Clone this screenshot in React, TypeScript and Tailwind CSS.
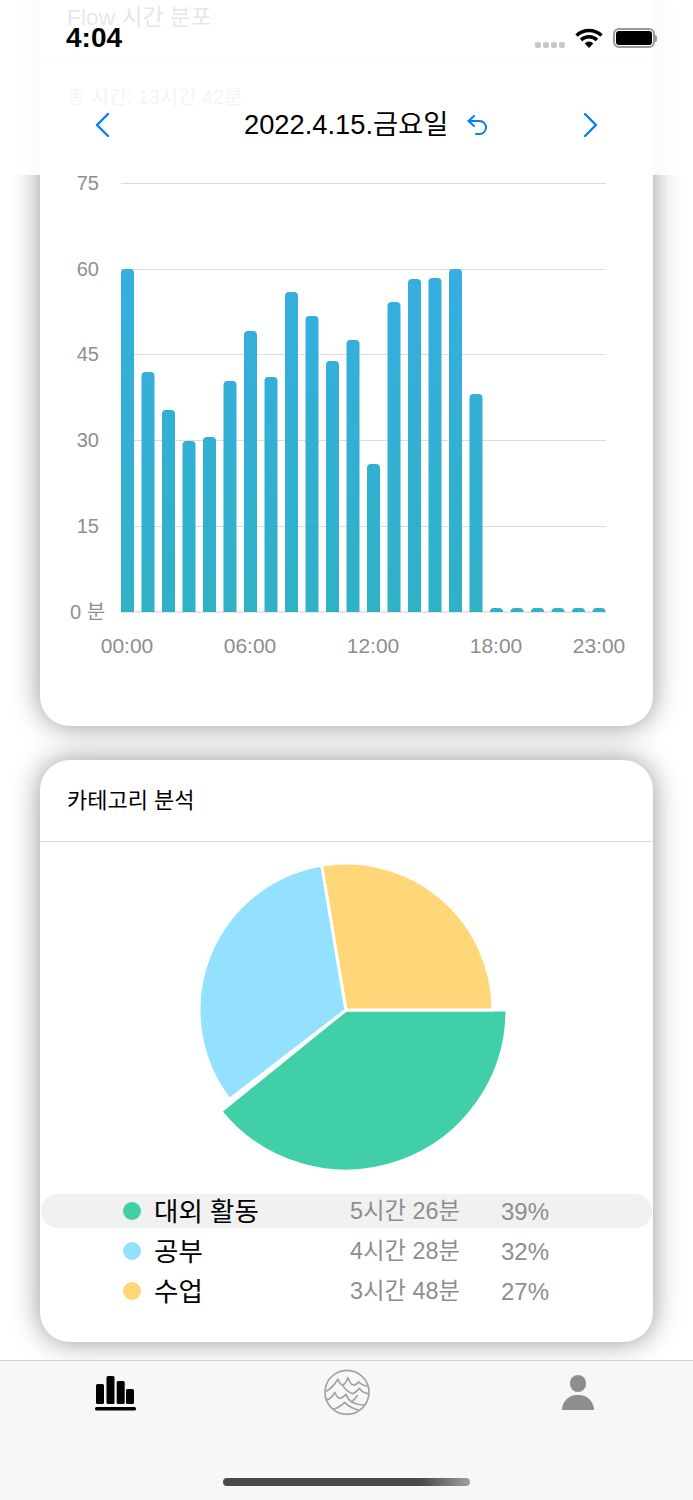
const fontStack = 'font-["Liberation_Sans","Noto_Sans_CJK_KR",sans-serif]'

const barTops = [269, 372, 410, 441, 437, 381, 331, 377, 292, 316, 361, 340, 464, 302, 279, 278, 269, 394, 608, 608, 608, 608, 608, 608]
const gridLines = [
  { y: 183, label: '75' },
  { y: 269, label: '60' },
  { y: 354, label: '45' },
  { y: 440, label: '30' },
  { y: 526, label: '15' },
]
const hourLabels = [
  { x: 127, label: '00:00' },
  { x: 250, label: '06:00' },
  { x: 373, label: '12:00' },
  { x: 496, label: '18:00' },
  { x: 599, label: '23:00' },
]
const legend = [
  { name: '대외 활동', time: '5시간 26분', pct: '39%', dot: 'bg-[#41cfa8]', active: true },
  { name: '공부', time: '4시간 28분', pct: '32%', dot: 'bg-[#93e1fe]', active: false },
  { name: '수업', time: '3시간 48분', pct: '27%', dot: 'bg-[#ffd778]', active: false },
]

function slice(r: number, from: number, to: number) {
  const rad = (deg: number) => (deg * Math.PI) / 180
  const cx = 306
  const cy = 168
  const x1 = cx + r * Math.cos(rad(from))
  const y1 = cy + r * Math.sin(rad(from))
  const x2 = cx + r * Math.cos(rad(to))
  const y2 = cy + r * Math.sin(rad(to))
  const large = to - from > 180 ? 1 : 0
  return `M${cx} ${cy}L${x1} ${y1}A${r} ${r} 0 ${large} 1 ${x2} ${y2}Z`
}

function BarChart() {
  // chart coordinates are page y minus 170, page x minus 40
  return (
    <svg className="mt-[60px] block" width="613" height="500" viewBox="40 170 613 500">
      <defs>
        <linearGradient id="bar" x1="0" y1="269" x2="0" y2="612" gradientUnits="userSpaceOnUse">
          <stop offset="0" stopColor="#36aee0" />
          <stop offset="1" stopColor="#2fb1c6" />
        </linearGradient>
      </defs>
      {gridLines.map((g) => (
        <g key={g.y}>
          <line x1="121" x2="606" y1={g.y + 0.5} y2={g.y + 0.5} stroke="#dcdcdc" />
          <text x="99" y={g.y + 7} textAnchor="end" fontSize="20" fill="#8e8e8e">{g.label}</text>
        </g>
      ))}
      <line x1="121" x2="606" y1="612" y2="612" stroke="#e6e6e6" strokeWidth="2" />
      <text x="70" y="619" fontSize="20" fill="#8e8e8e">0 분</text>
      {barTops.map((top, i) => (
        <path
          key={i}
          d={`M${121 + i * 20.5} 612V${top + 4}q0 -4 4 -4h5q4 0 4 4V612Z`}
          fill="url(#bar)"
        />
      ))}
      {hourLabels.map((h) => (
        <text key={h.x} x={h.x} y="653" textAnchor="middle" fontSize="21" fill="#8e8e8e">{h.label}</text>
      ))}
    </svg>
  )
}

function PieChart() {
  return (
    <svg className="block" width="613" height="352" viewBox="0 0 613 352">
      <path d={slice(161, 0, 141)} fill="#41cfa8" stroke="#fff" strokeWidth="3" strokeLinejoin="round" />
      <path d={slice(147, 142.5, 260.5)} fill="#93e1fe" stroke="#fff" strokeWidth="3" strokeLinejoin="round" />
      <path d={slice(147, 260.5, 360)} fill="#ffd778" stroke="#fff" strokeWidth="3" strokeLinejoin="round" />
    </svg>
  )
}

function StatusBar() {
  return (
    <div className="flex h-[76px] items-center pl-[66px]">
      <span className="text-[28px] leading-none font-bold text-black">4:04</span>
      <div className="mt-[14px] ml-auto flex gap-[2px]">
        <span className="h-[6px] w-[6px] rounded-[2px] bg-[#c8c8c8]" />
        <span className="h-[6px] w-[6px] rounded-[2px] bg-[#c8c8c8]" />
        <span className="h-[6px] w-[6px] rounded-[2px] bg-[#c8c8c8]" />
        <span className="h-[6px] w-[6px] rounded-[2px] bg-[#c8c8c8]" />
      </div>
      <svg className="ml-[10px]" width="28" height="20" viewBox="0 0 28 20" fill="none" stroke="#000" strokeWidth="3.4">
        <path d="M1.5 7.5a18 18 0 0 1 25 0" />
        <path d="M6 12a11.5 11.5 0 0 1 16 0" />
        <path d="M14 20l-4.3-4.6a6 6 0 0 1 8.6 0Z" fill="#000" stroke="none" />
      </svg>
      <div className="ml-[10px] mr-[36px] flex items-center">
        <div className="h-[20px] w-[42px] rounded-[6px] border-2 border-[#9a9a9a] p-[1px]">
          <div className="h-full w-full rounded-[3px] bg-black" />
        </div>
        <div className="h-[7px] w-[2px] rounded-r-sm bg-[#9a9a9a]" />
      </div>
    </div>
  )
}

function DateBar() {
  return (
    <div className="flex h-[98px] items-center pr-[94px] pl-[94px]">
      <svg width="16" height="26" viewBox="0 0 16 26" fill="none" stroke="#0a7cf5" strokeWidth="2.4" strokeLinecap="round" strokeLinejoin="round">
        <path d="M14 2 3 13l11 11" />
      </svg>
      <span className="ml-[134px] w-[206px] text-[27.3px] leading-none whitespace-nowrap text-black">2022.4.15.금요일</span>
      <svg className="ml-[15px]" width="24" height="24" viewBox="0 0 24 24" fill="none" stroke="#0a7cf5" strokeWidth="2" strokeLinecap="round" strokeLinejoin="round">
        <path d="M9 13 3.5 8 9 3" />
        <path d="M3.5 8h11a6 6 0 0 1 0 13H11" />
      </svg>
      <svg className="ml-auto" width="16" height="26" viewBox="0 0 16 26" fill="none" stroke="#0a7cf5" strokeWidth="2.4" strokeLinecap="round" strokeLinejoin="round">
        <path d="M2 2l11 11L2 24" />
      </svg>
    </div>
  )
}

function TabBar() {
  return (
    <div className="mt-[18px] flex h-[140px] flex-col border-t border-[#cccccc] bg-[#f7f7f7]">
      <div className="grid h-[117px] grid-cols-3">
        <div className="flex justify-center pt-[15px]">
          <svg width="41" height="35" viewBox="0 0 41 35" fill="#000">
            <rect x="1" y="8" width="8" height="20" rx="1.5" />
            <rect x="11.5" y="0" width="8" height="28" rx="1.5" />
            <rect x="21.7" y="5" width="8" height="23" rx="1.5" />
            <rect x="31" y="13" width="8" height="15" rx="1.5" />
            <rect x="0" y="31" width="41" height="3.5" rx="1.5" />
          </svg>
        </div>
        <div className="flex justify-center pt-[4px]">
          <svg width="90" height="55" viewBox="0 0 270 165" fill="none" stroke="#a3a3a3" strokeWidth="5" strokeLinejoin="round" strokeLinecap="round">
            <clipPath id="waves">
              <circle cx="135" cy="82" r="66" />
            </clipPath>
            <circle cx="135" cy="82" r="66" />
            <g clipPath="url(#waves)">
              <path d="M74 78q20-12 34-36q6 18 14 18q8-2 16-22q8 22 17 22q8 0 15-10q10 12 28 13" />
              <path d="M122 60q8 18 30 26q8-2 20-16q10 14 26 16" />
              <path d="M72 106q18-6 26-24q8 16 15 18q10-2 19-12q6 16 18 24q20 10 46 8" />
              <path d="M150 110q8-8 16-18" />
              <path d="M88 134q22-4 40-22q16 18 52 26" />
            </g>
          </svg>
        </div>
        <div className="flex flex-col items-center pt-[14px]">
          <div className="h-[17px] w-[16px] rounded-full bg-[#8e8e8e]" />
          <div className="mt-[3px] h-[15px] w-[32px] rounded-t-full rounded-b-[2px] bg-[#8e8e8e]" />
        </div>
      </div>
      <div className="mx-auto h-[8px] w-[247px] rounded-full bg-gradient-to-r from-[#4a4a4a] from-80% to-[#a0a0a0]" />
    </div>
  )
}

export default function App() {
  return (
    <div className={`relative flex h-[1500px] w-[693px] flex-col overflow-hidden bg-white ${fontStack}`}>
      <div className="flex flex-col px-[40px]">
        <div className="-mt-[24px] h-[750px] rounded-[30px] bg-white shadow-[0_0_28px_rgba(0,0,0,0.42)]">
          <div className="flex h-[82px] items-center border-b border-[#dddddd] px-[27px] pt-[2px] text-[22.8px] text-black">
            Flow 시간 분포
          </div>
          <div className="px-[27px] pt-[26px] text-[19.8px] leading-[26px] text-[#8e8e8e]">총 시간: 13시간 42분</div>
          <BarChart />
        </div>
        <div className="mt-[34px] h-[582px] rounded-[30px] bg-white shadow-[0_0_28px_rgba(0,0,0,0.42)]">
          <div className="flex h-[82px] items-center border-b border-[#dddddd] px-[27px] text-[22px] text-black">
            카테고리 분석
          </div>
          <PieChart />
          <div className="flex flex-col gap-[6px] px-px">
            {legend.map((row) => (
              <div
                key={row.name}
                className={row.active
                  ? 'flex h-[34px] items-center rounded-[17px] bg-[#f1f1f1] pl-[82px]'
                  : 'flex h-[34px] items-center rounded-[17px] pl-[82px]'}
              >
                <span className={`h-[18px] w-[18px] rounded-full ${row.dot}`} />
                <span className="ml-[13px] w-[196px] pt-[2px] text-[26.5px] leading-none text-black">{row.name}</span>
                <span className="w-[151px] pt-[2px] text-[23.4px] leading-none text-[#8e8e8e]">{row.time}</span>
                <span className="pt-[2px] text-[24px] leading-none text-[#8e8e8e]">{row.pct}</span>
              </div>
            ))}
          </div>
        </div>
      </div>
      <TabBar />
      {/* translucent nav header sits over the scrolled content */}
      <div className="absolute inset-x-0 top-0 h-[175px] bg-white/90">
        <StatusBar />
        <DateBar />
      </div>
    </div>
  )
}
